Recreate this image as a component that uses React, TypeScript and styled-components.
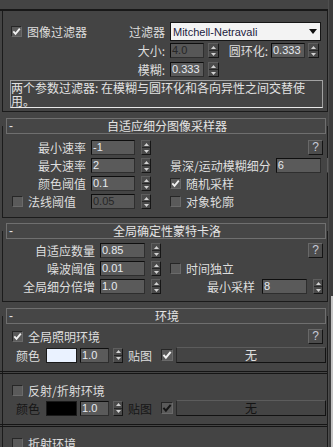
import React from 'react';
import styled, { createGlobalStyle } from 'styled-components';

const GlobalStyle = createGlobalStyle`
  html, body { margin: 0; padding: 0; background: #444444; }
  body {
    font-family: "Noto Sans CJK SC", "Noto Sans", sans-serif;
    font-size: 12px;
    color: #dedede;
  }
  * { box-sizing: border-box; }
`;

const Screen = styled.div`
  width: 333px;
  height: 447px;
  overflow: hidden;
  display: flex;
  background: #444444;
`;

const Main = styled.div`
  width: 328px;
  flex: none;
  padding-top: 9px;
  display: flex;
  flex-direction: column;
`;

const TopRule = styled.div`
  height: 2px;
  flex: none;
  background: #181818;
`;

const Frame = styled.div<{ $pt: number; $pb?: number; $pr: number; $under?: boolean; $open?: boolean }>`
  margin-left: 2px;
  margin-top: ${p => (p.$under ? -8 : 0)}px;
  width: 326px;
  flex: ${p => (p.$open ? 1 : 'none')};
  border-left: 1px solid #1b1b1b;
  border-right: 1px solid #1b1b1b;
  border-bottom: ${p => (p.$open ? 'none' : '1px solid #1b1b1b')};
  padding: ${p => p.$pt}px ${p => p.$pr}px ${p => p.$pb ?? 0}px 0;
  display: flex;
  flex-direction: column;
`;

const HeaderBar = styled.div<{ $mt: number }>`
  position: relative;
  z-index: 1;
  flex: none;
  margin: ${p => p.$mt}px 0 0 6px;
  width: 320px;
  height: 16px;
  border: 1px solid #6f6f6f;
  background: #464646;
  display: grid;
  grid-template-columns: 20px 1fr 20px;
  align-items: center;
  padding-left: 2px;
  line-height: 14px;
  color: #e4e4e4;
`;

const Minus = styled.span`
  font-family: "Liberation Sans", Arial, sans-serif;
  font-size: 12px;
`;

const HeaderTitle = styled.span`
  text-align: center;
  white-space: nowrap;
`;

const Row = styled.div<{ $h: number; $mt?: number }>`
  display: flex;
  align-items: center;
  flex: none;
  height: ${p => p.$h}px;
  margin-top: ${p => p.$mt ?? 0}px;
`;

const LeftCol = styled.div`
  width: 167px;
  flex: none;
  display: flex;
  align-items: center;
`;

const RightGroup = styled.div`
  margin-left: auto;
  display: flex;
  align-items: center;
`;

const Label = styled.span<{ $ml?: number | 'auto'; $dim?: boolean }>`
  margin-left: ${p => (p.$ml === 'auto' ? 'auto' : `${p.$ml ?? 0}px`)};
  white-space: nowrap;
  line-height: 15px;
  color: ${p => (p.$dim ? '#161616' : '#dedede')};
`;

const LabelCell = styled.div<{ $w: number; $ml?: number; $left?: boolean }>`
  width: ${p => p.$w}px;
  margin-left: ${p => p.$ml ?? 0}px;
  flex: none;
  display: flex;
  align-items: center;
  justify-content: ${p => (p.$left ? 'flex-start' : 'flex-end')};
  white-space: nowrap;
  line-height: 15px;
`;

const NumField = styled.div<{ $w: number; $ml: number; $disabled?: boolean }>`
  width: ${p => p.$w}px;
  height: 15px;
  flex: none;
  margin-left: ${p => p.$ml}px;
  background: ${p => (p.$disabled ? '#575757' : '#5a5a5a')};
  border-top: 1px solid #0e0e0e;
  border-left: 1px solid #0e0e0e;
  border-right: 1px solid #2e2e2e;
  border-bottom: 1px solid #2e2e2e;
  padding-left: 1px;
  font-family: "Liberation Sans", Arial, sans-serif;
  font-size: 11px;
  line-height: 13px;
  color: ${p => (p.$disabled ? '#262626' : '#e6eaf0')};
  white-space: nowrap;
  overflow: hidden;
`;

const SpinBox = styled.div<{ $ml: number; $w: number }>`
  width: ${p => p.$w}px;
  height: 15px;
  flex: none;
  margin-left: ${p => p.$ml}px;
  display: flex;
  flex-direction: column;
  background: #4a4a4a;
  border: 1px solid #161616;
  border-top-color: #5e5e5e;
  border-left-color: #5e5e5e;
`;

const SpinHalf = styled.div<{ $top?: boolean }>`
  height: ${p => (p.$top ? '7px' : 'auto')};
  flex: ${p => (p.$top ? 'none' : 1)};
  display: flex;
  align-items: center;
  justify-content: center;
  border-bottom: ${p => (p.$top ? '1px solid #262626' : 'none')};
`;

const Spinner = ({ ml = 6, w = 10 }: { ml?: number; w?: number }) => (
  <SpinBox $ml={ml} $w={w}>
    <SpinHalf $top>
      <svg width="5" height="3" viewBox="0 0 5 3">
        <path d="M0 3 L2.5 0 L5 3 Z" fill="#d2d2d2" />
      </svg>
    </SpinHalf>
    <SpinHalf>
      <svg width="5" height="3" viewBox="0 0 5 3">
        <path d="M0 0 L5 0 L2.5 3 Z" fill="#d2d2d2" />
      </svg>
    </SpinHalf>
  </SpinBox>
);

const Box = styled.div<{ $ml?: number; $size: number }>`
  width: ${p => p.$size}px;
  height: ${p => p.$size}px;
  flex: none;
  margin-left: ${p => p.$ml ?? 0}px;
  background: #5a5a5a;
  border: 1px solid #262626;
  border-right-color: #6a6a6a;
  border-bottom-color: #6a6a6a;
  display: flex;
  align-items: center;
  justify-content: center;
`;

const CheckBox = ({
  checked,
  dim,
  ml,
  size = 11,
}: {
  checked?: boolean;
  dim?: boolean;
  ml?: number;
  size?: number;
}) => (
  <Box $ml={ml} $size={size}>
    {checked && (
      <svg width={size - 2} height={size - 2} viewBox="0 0 9 9">
        <path
          d="M1.3 4.4 L3.5 6.9 L7.8 1.6"
          fill="none"
          stroke={dim ? '#161616' : '#f2f2f2'}
          strokeWidth="1.8"
        />
      </svg>
    )}
  </Box>
);

const CheckGroup = styled.div<{ $ml?: number }>`
  display: flex;
  align-items: center;
  gap: 5px;
  margin-left: ${p => p.$ml ?? 0}px;
  flex: none;
`;

const Select = styled.div`
  width: 151px;
  height: 19px;
  flex: none;
  margin-left: 5px;
  background: #f3f3f3;
  border: 1px solid #151515;
  display: flex;
  align-items: center;
  justify-content: space-between;
  padding: 0 3px 0 2px;
  font-family: "Liberation Sans", Arial, sans-serif;
  font-size: 11px;
  color: #1c1c40;
`;

const Help = styled.div<{ $mr?: number }>`
  width: 15px;
  height: 15px;
  flex: none;
  margin-left: auto;
  margin-right: ${p => p.$mr ?? 0}px;
  background: #4c4c4c;
  border: 1px solid;
  border-color: #686868 #141414 #141414 #686868;
  font-family: "Liberation Sans", Arial, sans-serif;
  font-size: 12px;
  line-height: 13px;
  text-align: center;
  color: #c6cad8;
`;

const Desc = styled.div`
  flex: none;
  margin: 3px 0 0 7px;
  width: 313px;
  height: 28px;
  border: 1px solid #a2a2a2;
  border-bottom-color: #e8e8e8;
  display: flex;
  flex-direction: column;
  color: #e2e2e2;
`;

const DescLine = styled.div`
  height: 13px;
  line-height: 13px;
  white-space: nowrap;
  overflow: visible;
`;

const Swatch = styled.div<{ $color: string; $ml: number }>`
  width: 31px;
  height: 15px;
  flex: none;
  margin-left: ${p => p.$ml}px;
  background: ${p => p.$color};
  border: 1px solid #1a1a1a;
`;

const MapButton = styled.div<{ $dim?: boolean }>`
  width: 150px;
  height: 16px;
  flex: none;
  margin-left: 3px;
  border: 1px solid;
  border-color: #5c5c5c #121212 #121212 #2a2a2a;
  background: #444444;
  text-align: center;
  line-height: 14px;
  color: ${p => (p.$dim ? '#141414' : '#e0e0e0')};
`;

const Groove = styled.div<{ $mt: number }>`
  flex: none;
  height: 3px;
  margin: ${p => p.$mt}px -1px 0 -3px;
  border-top: 1px solid #151515;
  border-bottom: 1px solid #151515;
`;

const ScrollTrack = styled.div`
  width: 5px;
  flex: none;
  display: flex;
  flex-direction: column;
  background: #3e3e3e;
  border-left: 1px solid #4e4e4e;
`;

const ScrollThumb = styled.div`
  margin-top: 296px;
  margin-left: 2px;
  flex: 1;
  background: #c4c4c4;
`;

const RollHeader = ({ mt, title }: { mt: number; title: string }) => (
  <HeaderBar $mt={mt}>
    <Minus>-</Minus>
    <HeaderTitle>{title}</HeaderTitle>
    <span />
  </HeaderBar>
);

export default function App() {
  return (
    <>
      <GlobalStyle />
      <Screen>
        <Main>
          <TopRule />
          <Frame $pt={11} $pb={3} $pr={6}>
            <Row $h={19}>
              <CheckGroup $ml={8}>
                <CheckBox checked />
                <Label>图像过滤器</Label>
              </CheckGroup>
              <Label $ml="auto">过滤器</Label>
              <Select>
                <span>Mitchell-Netravali</span>
                <svg width="8" height="5" viewBox="0 0 8 5">
                  <path d="M0 0 L8 0 L4 5 Z" fill="#111" />
                </svg>
              </Select>
            </Row>
            <Row $h={15} $mt={2}>
              <LabelCell $w={162}>大小:</LabelCell>
              <NumField $w={34} $ml={5} $disabled>4.0</NumField>
              <Spinner ml={4} w={11} />
              <LabelCell $w={40} $ml={9}>圆环化:</LabelCell>
              <NumField $w={34} $ml={3}>0.333</NumField>
              <Spinner ml={3} w={11} />
            </Row>
            <Row $h={15} $mt={4}>
              <LabelCell $w={162}>模糊:</LabelCell>
              <NumField $w={34} $ml={5}>0.333</NumField>
              <Spinner ml={4} w={11} />
            </Row>
            <Desc>
              <DescLine>两个参数过滤器: 在模糊与圆环化和各向异性之间交替使</DescLine>
              <DescLine>用。</DescLine>
            </Desc>
          </Frame>

          <RollHeader mt={6} title="自适应细分图像采样器" />
          <Frame $under $pt={14} $pb={8} $pr={4}>
            <Row $h={15}>
              <LeftCol>
                <LabelCell $w={83}>最小速率</LabelCell>
                <NumField $w={44} $ml={5}>-1</NumField>
                <Spinner />
              </LeftCol>
              <Help>?</Help>
            </Row>
            <Row $h={15} $mt={3}>
              <LeftCol>
                <LabelCell $w={83}>最大速率</LabelCell>
                <NumField $w={44} $ml={5}>2</NumField>
                <Spinner />
              </LeftCol>
              <RightGroup>
                <Label>景深/运动模糊细分</Label>
                <NumField $w={45} $ml={5}>6</NumField>
                <Spinner />
              </RightGroup>
            </Row>
            <Row $h={15} $mt={3}>
              <LeftCol>
                <LabelCell $w={83}>颜色阈值</LabelCell>
                <NumField $w={44} $ml={5}>0.1</NumField>
                <Spinner />
              </LeftCol>
              <CheckGroup>
                <CheckBox checked />
                <Label>随机采样</Label>
              </CheckGroup>
            </Row>
            <Row $h={15} $mt={3}>
              <LeftCol>
                <LabelCell $w={83} $left>
                  <CheckGroup $ml={9}>
                    <CheckBox />
                    <Label>法线阈值</Label>
                  </CheckGroup>
                </LabelCell>
                <NumField $w={44} $ml={5} $disabled>0.05</NumField>
                <Spinner />
              </LeftCol>
              <CheckGroup>
                <CheckBox />
                <Label>对象轮廓</Label>
              </CheckGroup>
            </Row>
          </Frame>

          <RollHeader mt={5} title="全局确定性蒙特卡洛" />
          <Frame $under $pt={12} $pb={7} $pr={4}>
            <Row $h={15}>
              <LeftCol>
                <LabelCell $w={92}>自适应数量</LabelCell>
                <NumField $w={45} $ml={5}>0.85</NumField>
                <Spinner />
              </LeftCol>
              <Help>?</Help>
            </Row>
            <Row $h={15} $mt={3}>
              <LeftCol>
                <LabelCell $w={92}>噪波阈值</LabelCell>
                <NumField $w={45} $ml={5}>0.01</NumField>
                <Spinner />
              </LeftCol>
              <CheckGroup>
                <CheckBox />
                <Label>时间独立</Label>
              </CheckGroup>
            </Row>
            <Row $h={15} $mt={3}>
              <LeftCol>
                <LabelCell $w={92}>全局细分倍增</LabelCell>
                <NumField $w={45} $ml={5}>1.0</NumField>
                <Spinner />
              </LeftCol>
              <RightGroup>
                <Label>最小采样</Label>
                <NumField $w={45} $ml={7}>8</NumField>
                <Spinner />
              </RightGroup>
            </Row>
          </Frame>

          <RollHeader mt={6} title="环境" />
          <Frame $under $open $pt={13} $pr={1}>
            <Row $h={15}>
              <CheckGroup $ml={9}>
                <CheckBox checked />
                <Label>全局照明环境</Label>
              </CheckGroup>
              <Help $mr={3}>?</Help>
            </Row>
            <Row $h={16} $mt={3}>
              <Label $ml={13}>颜色</Label>
              <Swatch $color="#eaf2ff" $ml={6} />
              <NumField $w={29} $ml={3}>1.0</NumField>
              <Spinner ml={4} />
              <Label $ml={5}>贴图</Label>
              <CheckBox checked ml={9} size={12} />
              <MapButton>无</MapButton>
            </Row>
            <Groove $mt={8} />
            <Row $h={15} $mt={9}>
              <CheckGroup $ml={9}>
                <CheckBox />
                <Label>反射/折射环境</Label>
              </CheckGroup>
            </Row>
            <Row $h={16} $mt={2}>
              <Label $ml={13} $dim>颜色</Label>
              <Swatch $color="#000000" $ml={6} />
              <NumField $w={29} $ml={3}>1.0</NumField>
              <Spinner ml={4} />
              <Label $ml={5} $dim>贴图</Label>
              <CheckBox checked dim ml={9} size={12} />
              <MapButton $dim>无</MapButton>
            </Row>
            <Groove $mt={8} />
            <Row $h={15} $mt={9}>
              <CheckGroup $ml={9}>
                <CheckBox />
                <Label>折射环境</Label>
              </CheckGroup>
            </Row>
          </Frame>
        </Main>
        <ScrollTrack>
          <ScrollThumb />
        </ScrollTrack>
      </Screen>
    </>
  );
}
